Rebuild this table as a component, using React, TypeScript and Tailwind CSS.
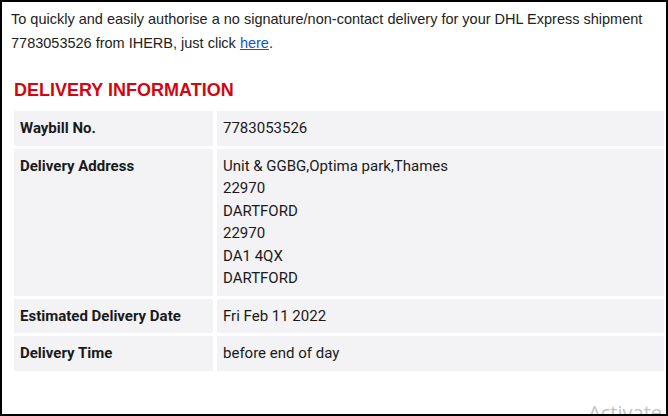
const ROWS: { label: string; lines: string[] }[] = [
  { label: "Waybill No.", lines: ["7783053526"] },
  {
    label: "Delivery Address",
    lines: [
      "Unit & GGBG,Optima park,Thames",
      "22970",
      "DARTFORD",
      "22970",
      "DA1 4QX",
      "DARTFORD",
    ],
  },
  { label: "Estimated Delivery Date", lines: ["Fri Feb 11 2022"] },
  { label: "Delivery Time", lines: ["before end of day"] },
];

export default function App() {
  return (
    <div className="relative h-[416px] w-[668px] overflow-hidden border-2 border-black bg-white">
      <p
        className="px-[9px] pt-[5px] text-[14.5px] leading-[24px] text-[#222]"
        style={{ fontFamily: '"Liberation Sans", Arial, sans-serif' }}
      >
        To quickly and easily authorise a no signature/non-contact delivery for your DHL Express
        shipment 7783053526 from IHERB, just click{" "}
        <a href="#" className="text-[#0b57d0] underline">
          here
        </a>
        .
      </p>

      <h2
        className="ml-[12px] mt-[24px] text-[18px] font-bold leading-[22px] text-[#d40511]"
        style={{ fontFamily: '"Liberation Sans", Arial, sans-serif' }}
      >
        DELIVERY INFORMATION
      </h2>

      <div
        className="ml-[12px] mt-[10px] grid grid-cols-[199px_447px] gap-x-[4px] gap-y-[3px] text-[15px] text-[#1a1a1a]"
        style={{ fontFamily: "Roboto, sans-serif" }}
      >
        {ROWS.map((row) => (
          <div key={row.label} className="contents">
            <div className="bg-[#f3f2f5] px-[6px] py-[6px] font-bold leading-[22.5px]">
              {row.label}
            </div>
            <div className="bg-[#f3f2f5] px-[6px] py-[6px] leading-[22.5px]">
              {row.lines.map((line, i) => (
                <div key={i}>{line}</div>
              ))}
            </div>
          </div>
        ))}
      </div>

      <span
        className="absolute right-[4px] top-[396px] text-[20px] text-[#c4c4c4]"
        style={{ fontFamily: '"Open Sans", sans-serif' }}
      >
        Activate
      </span>
    </div>
  );
}
